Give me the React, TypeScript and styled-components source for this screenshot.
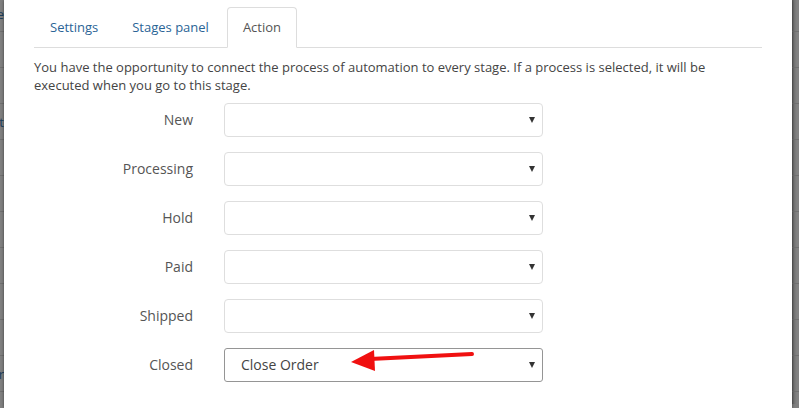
import React from 'react';
import styled, { createGlobalStyle, css } from 'styled-components';

const GlobalStyle = createGlobalStyle`
    html, body {
        margin: 0;
        padding: 0;
        background: #808080;
        overflow: hidden;
    }
    body {
        font-family: "Open Sans", "Liberation Sans", Arial, sans-serif;
    }
    * {
        box-sizing: border-box;
    }
`;

const Page = styled.div`
    position: relative;
    width: 799px;
    height: 408px;
    display: flex;
    overflow: hidden;
`;

const BackdropStrip = styled.div<{ side: 'left' | 'right' }>`
    height: 100%;
    overflow: hidden;
    display: flex;
    flex-direction: column;
    background: #808080;
    margin-top: -4px;
    ${(props) => (props.side === 'left'
        ? css`width: 4px;`
        : css`width: 7px; background: linear-gradient(90deg, #5c5c5c 0px, #747474 2px, #828282 5px);`)};
`;

const BackdropRow = styled.div`
    flex: 0 0 36px;
    display: flex;
    align-items: center;
    justify-content: flex-end;
    border-bottom: 1px solid #707070;
    font-size: 13px;
    color: #1d3e5c;
    white-space: nowrap;
`;

const Modal = styled.div`
    position: relative;
    z-index: 1;
    width: 788px;
    height: 100%;
    background: #fff;
    box-shadow: 0 0 3px rgba(0, 0, 0, 0.5);
    padding: 7px 30px 0;
`;

const TabList = styled.ul`
    display: flex;
    list-style: none;
    margin: 0;
    padding: 0;
    border-bottom: 1px solid #ddd;
`;

const Tab = styled.li<{ active?: boolean }>`
    margin: 0 2px -1px 0;
    padding: 10px 15px;
    font-size: 13px;
    line-height: 18.57px;
    border: 1px solid transparent;
    border-radius: 4px 4px 0 0;
    color: #2a6496;
    cursor: pointer;
    ${(props) => props.active && css`
        color: #555;
        background: #fff;
        border-color: #ddd #ddd transparent;
    `}
`;

const Intro = styled.p`
    margin: 10px 0 8px;
    font-size: 13px;
    line-height: 18.57px;
    color: #444;
`;

const Form = styled.div`
    display: flex;
    flex-direction: column;
    gap: 15px;
`;

const Row = styled.div`
    display: grid;
    grid-template-columns: 159px 319px;
    column-gap: 31px;
    align-items: center;
`;

const Label = styled.label`
    text-align: right;
    font-size: 14px;
    color: #555;
`;

const SelectBox = styled.div<{ focused?: boolean }>`
    height: 34px;
    display: flex;
    align-items: center;
    justify-content: space-between;
    padding: 0 7px 0 16px;
    font-size: 14px;
    color: #444;
    border: 1px solid #dedede;
    border-radius: 4px;
    background: #fff;
    ${(props) => props.focused && css`
        border-color: #959595;
        border-radius: 3px;
    `}
`;

const Caret = styled.span`
    width: 0;
    height: 0;
    border-left: 3px solid transparent;
    border-right: 3px solid transparent;
    border-top: 6px solid #333;
    margin-top: 1px;
`;

const Annotation = styled.svg`
    position: absolute;
    left: 0;
    top: 0;
    z-index: 2;
    pointer-events: none;
`;

const stages = [
    { name: 'New', value: '' },
    { name: 'Processing', value: '' },
    { name: 'Hold', value: '' },
    { name: 'Paid', value: '' },
    { name: 'Shipped', value: '' },
    { name: 'Closed', value: 'Close Order' },
];

const leftRows = ['Close', '', '', 'List', '', '', '', '', '', '', 'Order', '', ''];
const rightRows = Array.from({ length: 13 }, () => '');

export default function App() {
    return (
        <>
            <GlobalStyle />
            <Page>
                <BackdropStrip side="left">
                    {leftRows.map((word, i) => (
                        <BackdropRow key={i}>{word}</BackdropRow>
                    ))}
                </BackdropStrip>
                <Modal>
                    <TabList>
                        <Tab>Settings</Tab>
                        <Tab>Stages panel</Tab>
                        <Tab active>Action</Tab>
                    </TabList>
                    <Intro>
                        You have the opportunity to connect the process of automation to every stage. If a process is selected, it will be executed when you go to this stage.
                    </Intro>
                    <Form>
                        {stages.map((stage) => (
                            <Row key={stage.name}>
                                <Label>{stage.name}</Label>
                                <SelectBox focused={stage.value !== ''}>
                                    <span>{stage.value}</span>
                                    <Caret />
                                </SelectBox>
                            </Row>
                        ))}
                    </Form>
                </Modal>
                <BackdropStrip side="right">
                    {rightRows.map((word, i) => (
                        <BackdropRow key={i}>{word}</BackdropRow>
                    ))}
                </BackdropStrip>
                <Annotation width="799" height="408" viewBox="0 0 799 408">
                    <line x1="472" y1="354" x2="370" y2="359" stroke="#f01010" strokeWidth="4" strokeLinecap="round" />
                    <polygon points="351,362 374,350 375,371" fill="#f01010" />
                </Annotation>
            </Page>
        </>
    );
}
